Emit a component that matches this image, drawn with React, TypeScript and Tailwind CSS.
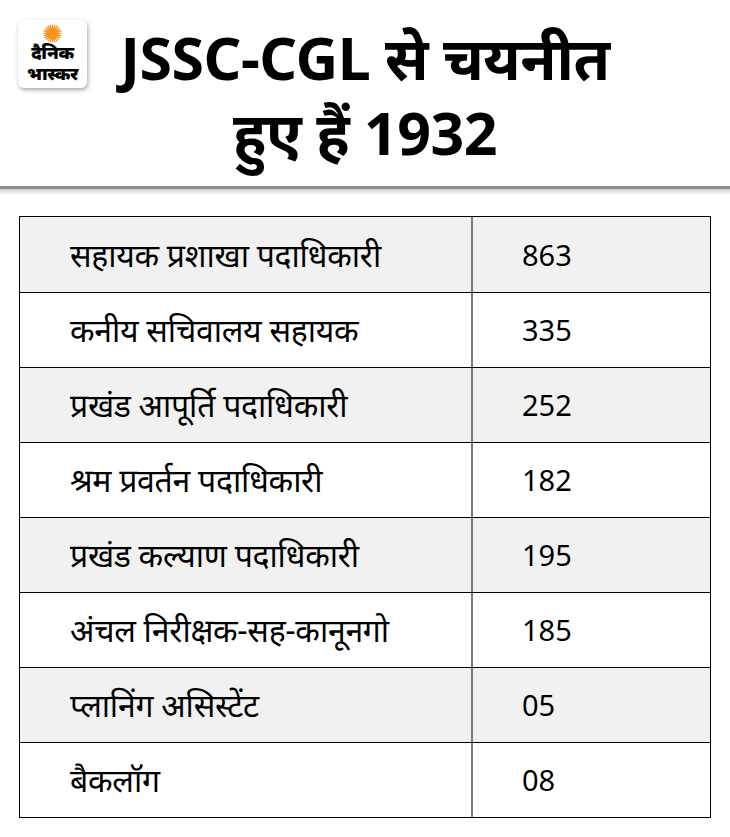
const rows = [
  { name: "सहायक प्रशाखा पदाधिकारी", count: "863" },
  { name: "कनीय सचिवालय सहायक", count: "335" },
  { name: "प्रखंड आपूर्ति पदाधिकारी", count: "252" },
  { name: "श्रम प्रवर्तन पदाधिकारी", count: "182" },
  { name: "प्रखंड कल्याण पदाधिकारी", count: "195" },
  { name: "अंचल निरीक्षक-सह-कानूनगो", count: "185" },
  { name: "प्लानिंग असिस्टेंट", count: "05" },
  { name: "बैकलॉग", count: "08" },
]

function Logo() {
  return (
    <div className="w-[69px] h-[68px] rounded-[6px] bg-white shadow-[1px_2px_4px_rgba(0,0,0,0.35)] flex flex-col items-center pt-[4px]">
      <svg width="19" height="19" viewBox="0 0 22 22">
        {Array.from({ length: 24 }).map((_, i) => {
          const a = (i / 24) * Math.PI * 2
          return (
            <line
              key={i}
              x1={11 + Math.cos(a) * 6}
              y1={11 + Math.sin(a) * 6}
              x2={11 + Math.cos(a) * 10.5}
              y2={11 + Math.sin(a) * 10.5}
              stroke="#f7941d"
              strokeWidth="1.5"
            />
          )
        })}
        <circle cx="11" cy="11" r="7" fill="#f7941d" />
      </svg>
      <div className="text-[18px] leading-[21px] font-black tracking-[-0.4px] text-black text-center -mt-[1px]">
        दैनिक
        <br />
        भास्कर
      </div>
    </div>
  )
}

export default function App() {
  return (
    <div className="w-[730px] h-[837px] bg-white font-['Noto_Sans',sans-serif] text-black">
      {/* header */}
      <div className="relative h-[189px] border-b-[3px] border-[#8a8a8a]">
        <div className="absolute left-[18px] top-[20px]">
          <Logo />
        </div>
        <h1 className="pt-[20px] text-center text-[59px] leading-[75px] font-bold tracking-[-0.5px]">
          JSSC-CGL से चयनीत
          <br />
          हुए हैं 1932
        </h1>
      </div>
      <div className="h-[6px] bg-gradient-to-b from-[#cfcfcf] to-white" />

      {/* table */}
      <div className="mx-[19px] mt-[21px] w-[692px] border-[1.5px] border-black">
        {rows.map((r, i) => (
          <div
            key={r.name}
            className={`flex h-[75px] items-center ${i % 2 === 0 ? "bg-[#f1f1f1]" : "bg-white"} ${i > 0 ? "border-t-[1.5px] border-black" : ""}`}
          >
            <div className="w-[453px] h-full flex items-center pl-[50px] text-[32px] tracking-[-0.3px] border-r-2 border-[#7a7a7a]">
              {r.name}
            </div>
            <div className="flex-1 pl-[49px] text-[29px]">{r.count}</div>
          </div>
        ))}
      </div>
    </div>
  )
}
